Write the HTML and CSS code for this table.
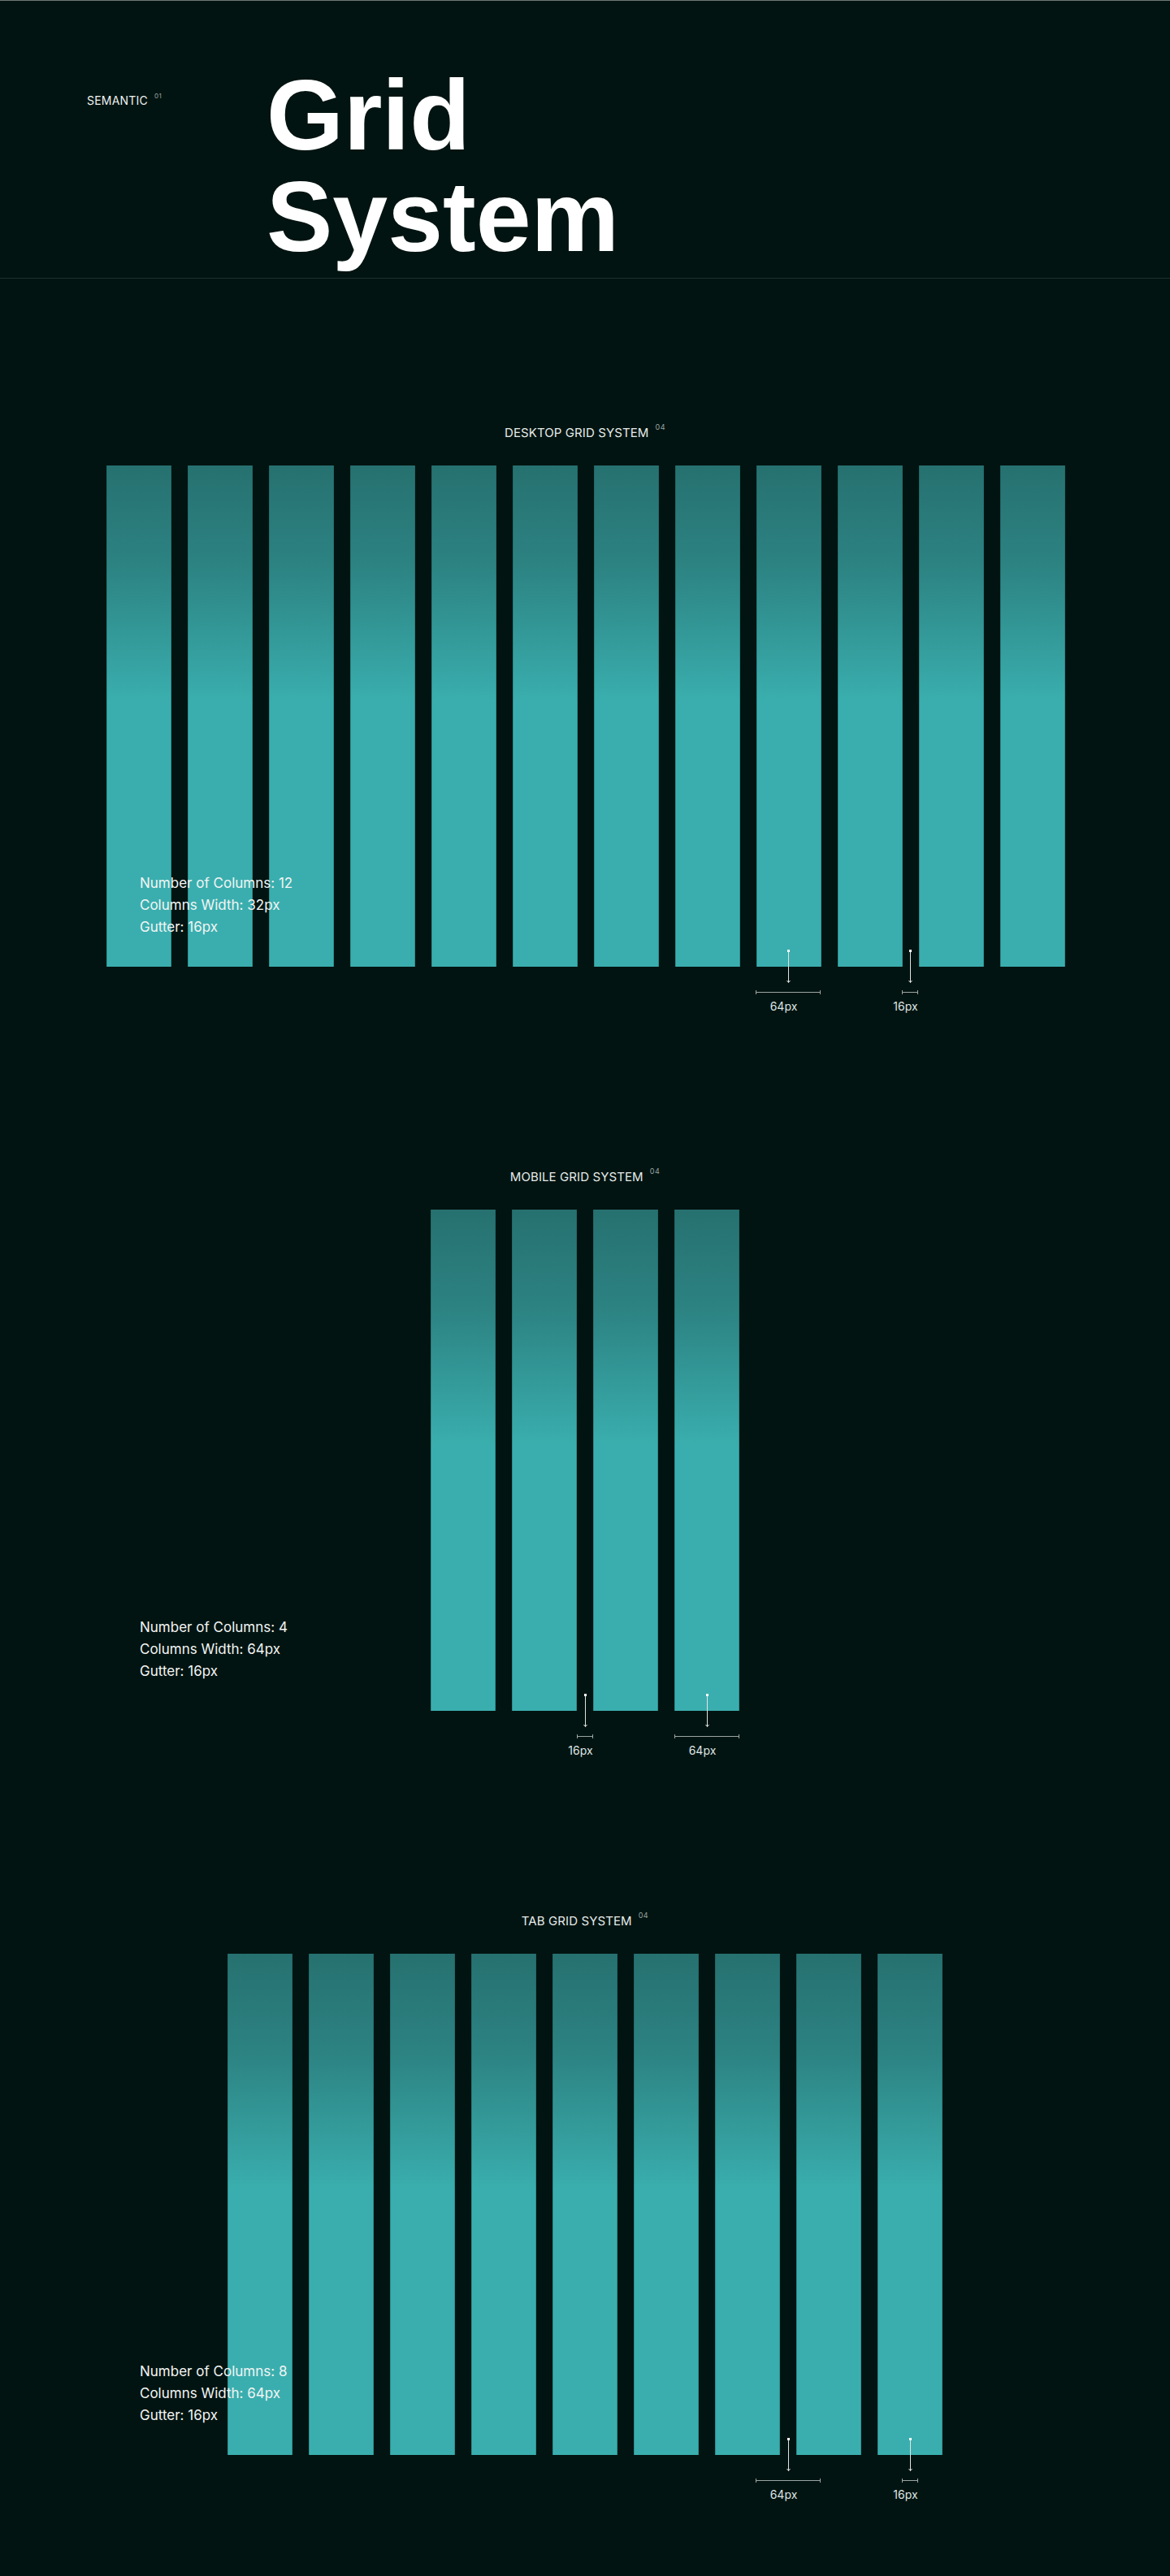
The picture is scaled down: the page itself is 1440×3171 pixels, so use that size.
FILE: index.html
```html
<!DOCTYPE html>
<html lang="en">
<head>
<meta charset="utf-8">
<title>Grid System</title>
<link rel="stylesheet" href="styles.css">
</head>
<body>
<div class="page">
  <header class="hero">
    <div class="eyebrow">SEMANTIC<sup class="num">01</sup></div>
    <h1 class="hero-title">Grid<br>System</h1>
  </header>

  <main class="main">
    <section class="grid-section">
      <h2 class="section-title">DESKTOP GRID SYSTEM<sup class="num">04</sup></h2>
      <div class="grid-stage">
        <div class="columns desktop">
          <div class="col"></div><div class="col"></div><div class="col"></div><div class="col"></div>
          <div class="col"></div><div class="col"></div><div class="col"></div><div class="col"></div>
          <div class="col"></div><div class="col"></div><div class="col"></div><div class="col"></div>
        </div>
        <div class="info">
          <p>Number of Columns: 12</p>
          <p>Columns Width: 32px</p>
          <p>Gutter: 16px</p>
        </div>
        <div class="measure wide at-930">
          <svg class="arrow" width="9" height="42" viewBox="0 0 9 42"><rect x="3" y="0" width="3" height="3" fill="#ffffff"/><line x1="4.5" y1="2" x2="4.5" y2="40.5" stroke="#dfe4e3" stroke-width="1"/><polyline points="2.5,38 4.5,40.5 6.5,38" fill="none" stroke="#dfe4e3" stroke-width="1"/></svg>
          <div class="dim"></div>
          <span class="measure-label">64px</span>
        </div>
        <div class="measure narrow at-1110">
          <svg class="arrow" width="9" height="42" viewBox="0 0 9 42"><rect x="3" y="0" width="3" height="3" fill="#ffffff"/><line x1="4.5" y1="2" x2="4.5" y2="40.5" stroke="#dfe4e3" stroke-width="1"/><polyline points="2.5,38 4.5,40.5 6.5,38" fill="none" stroke="#dfe4e3" stroke-width="1"/></svg>
          <div class="dim"></div>
          <span class="measure-label">16px</span>
        </div>
      </div>
    </section>

    <section class="grid-section">
      <h2 class="section-title">MOBILE GRID SYSTEM<sup class="num">04</sup></h2>
      <div class="grid-stage">
        <div class="columns">
          <div class="col"></div><div class="col"></div><div class="col"></div><div class="col"></div>
        </div>
        <div class="info">
          <p>Number of Columns: 4</p>
          <p>Columns Width: 64px</p>
          <p>Gutter: 16px</p>
        </div>
        <div class="measure narrow at-710">
          <svg class="arrow" width="9" height="42" viewBox="0 0 9 42"><rect x="3" y="0" width="3" height="3" fill="#ffffff"/><line x1="4.5" y1="2" x2="4.5" y2="40.5" stroke="#dfe4e3" stroke-width="1"/><polyline points="2.5,38 4.5,40.5 6.5,38" fill="none" stroke="#dfe4e3" stroke-width="1"/></svg>
          <div class="dim"></div>
          <span class="measure-label">16px</span>
        </div>
        <div class="measure wide at-830">
          <svg class="arrow" width="9" height="42" viewBox="0 0 9 42"><rect x="3" y="0" width="3" height="3" fill="#ffffff"/><line x1="4.5" y1="2" x2="4.5" y2="40.5" stroke="#dfe4e3" stroke-width="1"/><polyline points="2.5,38 4.5,40.5 6.5,38" fill="none" stroke="#dfe4e3" stroke-width="1"/></svg>
          <div class="dim"></div>
          <span class="measure-label">64px</span>
        </div>
      </div>
    </section>

    <section class="grid-section">
      <h2 class="section-title">TAB GRID SYSTEM<sup class="num">04</sup></h2>
      <div class="grid-stage">
        <div class="columns">
          <div class="col"></div><div class="col"></div><div class="col"></div>
          <div class="col"></div><div class="col"></div><div class="col"></div>
          <div class="col"></div><div class="col"></div><div class="col"></div>
        </div>
        <div class="info">
          <p>Number of Columns: 8</p>
          <p>Columns Width: 64px</p>
          <p>Gutter: 16px</p>
        </div>
        <div class="measure wide at-930">
          <svg class="arrow" width="9" height="42" viewBox="0 0 9 42"><rect x="3" y="0" width="3" height="3" fill="#ffffff"/><line x1="4.5" y1="2" x2="4.5" y2="40.5" stroke="#dfe4e3" stroke-width="1"/><polyline points="2.5,38 4.5,40.5 6.5,38" fill="none" stroke="#dfe4e3" stroke-width="1"/></svg>
          <div class="dim"></div>
          <span class="measure-label">64px</span>
        </div>
        <div class="measure narrow at-1110">
          <svg class="arrow" width="9" height="42" viewBox="0 0 9 42"><rect x="3" y="0" width="3" height="3" fill="#ffffff"/><line x1="4.5" y1="2" x2="4.5" y2="40.5" stroke="#dfe4e3" stroke-width="1"/><polyline points="2.5,38 4.5,40.5 6.5,38" fill="none" stroke="#dfe4e3" stroke-width="1"/></svg>
          <div class="dim"></div>
          <span class="measure-label">16px</span>
        </div>
      </div>
    </section>
  </main>
</div>
</body>
</html>
```

FILE: styles.css
```css
* { box-sizing: border-box; }

html, body {
  margin: 0;
  padding: 0;
  background: #021411;
}

body {
  font-family: Inter, "Noto Sans", sans-serif;
  color: #eef2f1;
}

.page {
  border-top: 1px solid #6e7876;
  min-height: 3171px;
}

/* ---------- hero ---------- */
.hero {
  display: flex;
  align-items: flex-start;
  padding: 79px 0 12px 107px;
  border-bottom: 1px solid #1e302d;
}

.eyebrow {
  width: 221px;
  flex: none;
  margin-top: 34px;
  font-size: 14px;
  line-height: 20px;
  letter-spacing: 0.2px;
  color: #eef2f1;
}

.num {
  font-size: 8px;
  line-height: 0;
  vertical-align: 8px;
  margin-left: 8px;
  color: #9aa5a2;
  letter-spacing: 0.5px;
}

.hero-title {
  margin: 0;
  font-family: "Liberation Sans", Arial, sans-serif;
  font-weight: 700;
  font-size: 122px;
  line-height: 125px;
  color: #ffffff;
}

/* ---------- sections ---------- */
.main {
  display: flex;
  flex-direction: column;
  gap: 249px;
  padding: 180px 0 149px;
}

.section-title {
  margin: 0 0 30px;
  text-align: center;
  font-size: 15px;
  font-weight: 400;
  line-height: 20px;
  color: #e6ebea;
  letter-spacing: 0.1px;
}

.section-title .num {
  font-size: 9px;
  vertical-align: 9px;
}

.grid-stage {
  position: relative;
  height: 617px;
}

.columns {
  display: flex;
  justify-content: center;
  gap: 20px;
  height: 100%;
}

.columns.desktop {
  padding-left: 2px;
}

.col {
  width: 80px;
  flex: none;
  height: 100%;
  background: linear-gradient(180deg, #267170 0%, #2c8382 20%, #3aaeae 47%, #3aaeae 100%);
  box-shadow: inset 1px 0 0 rgba(20, 90, 90, 0.35), inset -1px 0 0 rgba(20, 90, 90, 0.35);
}

.info {
  position: absolute;
  left: 172px;
  bottom: 35px;
  z-index: 2;
}

.info p {
  margin: 0;
  font-size: 17px;
  line-height: 27px;
  color: #f2f5f4;
}

/* ---------- measurements ---------- */
.measure {
  position: absolute;
  top: calc(100% - 21px);
  display: flex;
  flex-direction: column;
  align-items: center;
  z-index: 2;
}

.measure.wide { width: 80px; }
.measure.narrow { width: 20px; }

.at-710 { left: 710px; }
.at-830 { left: 830px; }
.at-930 { left: 930px; }
.at-1110 { left: 1110px; }

.arrow { display: block; }

.dim {
  position: relative;
  width: 100%;
  height: 5px;
  margin-top: 8px;
  border-left: 1px solid #9aa5a2;
  border-right: 1px solid #9aa5a2;
}

.dim::before {
  content: "";
  position: absolute;
  left: 0;
  right: 0;
  top: 2px;
  height: 1px;
  background: #9aa5a2;
}

.measure-label {
  margin-top: 6px;
  margin-right: 11px;
  font-size: 14px;
  line-height: 18px;
  color: #dfe4e3;
  white-space: nowrap;
}
```
